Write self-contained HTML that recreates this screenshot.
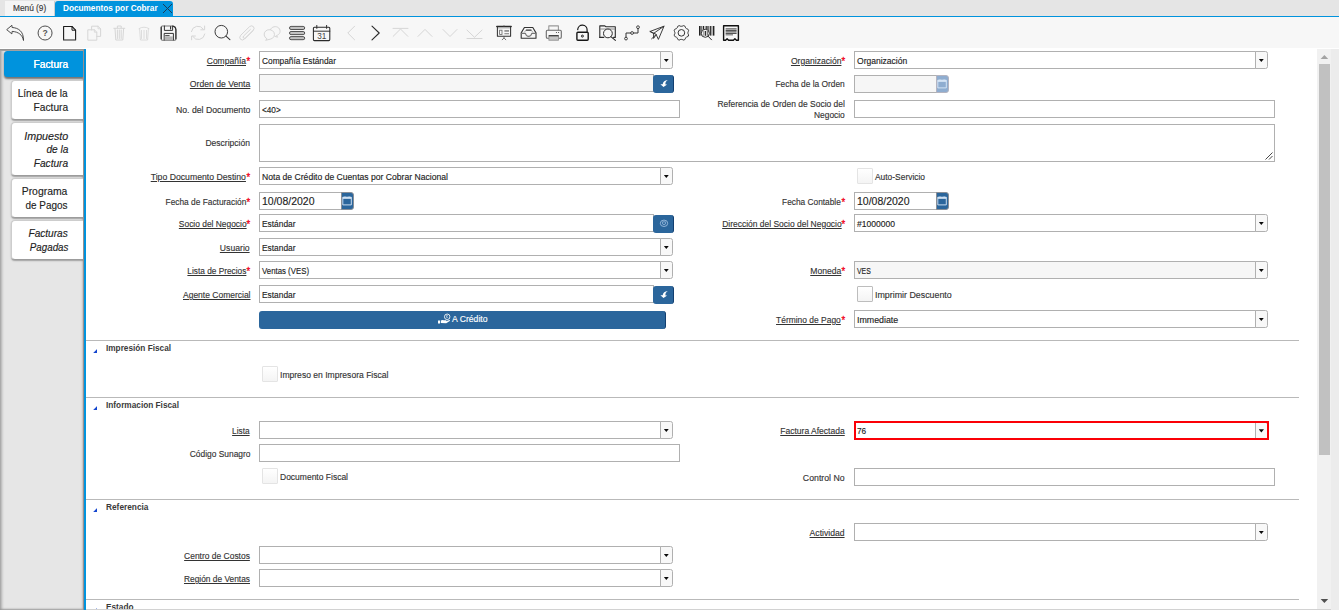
<!DOCTYPE html>
<html lang="es">
<head>
<meta charset="utf-8">
<title>Documentos por Cobrar</title>
<style>
html,body{margin:0;padding:0;}
body{width:1339px;height:610px;overflow:hidden;position:relative;background:#fff;font-family:"Liberation Sans",sans-serif;}
.t{position:absolute;white-space:nowrap;display:block;-webkit-text-stroke:0.15px;}
.in{position:absolute;box-sizing:border-box;border:1px solid #b0b0b0;background:#fff;}
.ro{background:#f6f6f6;}
.cb{position:absolute;box-sizing:border-box;border:1px solid #b0b0b0;background:#f8f8f8;border-radius:0 2.5px 2.5px 0;}
.cb:after{content:"";position:absolute;left:2.7px;top:6.8px;width:5.3px;height:3.3px;background:#0a0a0a;clip-path:polygon(0 0,100% 0,50% 100%);}
.bt{position:absolute;box-sizing:border-box;background:#2b669c;border-radius:3px;border-right:1px solid #123f70;}
.ck{position:absolute;box-sizing:border-box;width:15.6px;height:15.6px;border:1px solid #e4e4e4;border-radius:1px;background:linear-gradient(#fff,#f4f4f4);}
.sep{position:absolute;left:86px;width:1213px;height:1px;background:#b9b9b9;}
.tri{position:absolute;width:4.2px;height:4.4px;background:#1446cf;clip-path:polygon(100% 0,100% 100%,0 100%);}
svg{position:absolute;overflow:visible;}

</style>
</head>
<body>
<div style="position:absolute;left:0px;top:0px;width:1339px;height:16px;background:#e5e5e5;"></div>
<div style="position:absolute;left:5px;top:1px;width:48.5px;height:15px;background:#f5f5f5;border-right:1px solid #cfcfcf;"></div>
<div style="position:absolute;left:55px;top:1px;width:118px;height:16px;background:#0093dd;border-radius:3px 3px 0 0;"></div>
<div style="position:absolute;left:0px;top:16px;width:1339px;height:1.3px;background:#0093dd;"></div>
<span class="t" style="transform:scaleX(1.0056);left:12.8px;top:4px;font-size:8.25px;line-height:10px;color:#3a3a3a;font-weight:400;font-style:normal;transform-origin:left center;">Menú (9)</span>
<span class="t" style="transform:scaleX(0.9969);left:63.4px;top:4px;font-size:8.25px;line-height:10px;color:#fff;font-weight:700;font-style:normal;transform-origin:left center;-webkit-text-stroke:0;">Documentos por Cobrar</span>
<svg style="left:162px;top:3px" width="11" height="11" viewBox="0 0 11 11"><path d="M1,1 L10,10 M10,1 L1,10" stroke="#1d3b55" stroke-width="1" fill="none"/></svg>
<div style="position:absolute;left:0px;top:17.3px;width:1339px;height:30.7px;background:#f7f7f7;"></div>
<svg style="left:0;top:17px" width="760" height="31" viewBox="0 17 760 31">
<path d="M7,29.4 L11.9,25.3 L12.1,27.5 C18,27.8 23.7,31 23.5,40.5 C22.6,35 18.5,31.8 12.1,31.4 L11.9,33.5 Z" stroke="#3a3a3a" stroke-width="0.9" fill="none" stroke-linejoin="round" stroke-linecap="round" />
<circle cx="45.05" cy="33" r="7" fill="none" stroke="#444" stroke-width="0.95"/>
<text x="45" y="36.2" font-family="Liberation Sans, sans-serif" font-size="8.6" font-weight="700" fill="#555" text-anchor="middle">?</text>
<path d="M63.6,26.5 H72 L75.6,30.2 V40 H63.6 Z" stroke="#1a1a1a" stroke-width="1.1" fill="none" stroke-linejoin="round" stroke-linecap="round" />
<path d="M72,26.5 V30.2 H75.6" stroke="#1a1a1a" stroke-width="1" fill="none" stroke-linejoin="round" stroke-linecap="round" />
<path d="M63.6,40.3 H75.6" stroke="#999" stroke-width="0.8" fill="none" stroke-linejoin="round" stroke-linecap="round" />
<path d="M91.6,30 V26.2 H98 L100.6,28.8 V36.4 H96.8" stroke="#d6d6d6" stroke-width="1" fill="none" stroke-linejoin="round" stroke-linecap="round" />
<path d="M98,26.2 V28.8 H100.6" stroke="#d6d6d6" stroke-width="0.8" fill="none" stroke-linejoin="round" stroke-linecap="round" />
<path d="M88.2,29.8 H94.4 L96.8,32.2 V40.2 H88.2 Z" stroke="#d6d6d6" stroke-width="1" fill="none" stroke-linejoin="round" stroke-linecap="round" />
<path d="M94.4,29.8 V32.2 H96.8" stroke="#d6d6d6" stroke-width="0.8" fill="none" stroke-linejoin="round" stroke-linecap="round" />
<path d="M113.8,28.3 H124.8 M117.4,28 V26 H121.2 V28 M115,28.5 L115.8,40 H122.8 L123.6,28.5 M117.4,30 V38.5 M119.3,30 V38.5 M121.2,30 V38.5" stroke="#d6d6d6" stroke-width="1" fill="none" stroke-linejoin="round" stroke-linecap="round" />
<path d="M139,28.6 Q144,25.6 149,28.6 M139.6,28.8 L140.4,40 H147.6 L148.4,28.8 M141.5,30.4 V38.5 M144,30.4 V38.5 M146.5,30.4 V38.5" stroke="#d6d6d6" stroke-width="0.8" fill="none" stroke-linejoin="round" stroke-linecap="round" />
<path d="M162.3,26 H173 Q175.9,26.6 175.9,29.4 V39 Q175.9,40.2 174.8,40.2 H162.3 Q161.2,40.2 161.2,39 V27.1 Q161.2,26 162.3,26 Z" stroke="#777" stroke-width="1.1" fill="none" stroke-linejoin="round" stroke-linecap="round" />
<path d="M161.2,27.4 V38.8 M175.9,29.6 V38.8 M173.4,26.3 Q175.6,27 175.9,29.6" stroke="#2a2a2a" stroke-width="1.1" fill="none" stroke-linejoin="round" stroke-linecap="round" />
<path d="M164.4,26 V30.4 H172.6 V26" stroke="#2a2a2a" stroke-width="0.95" fill="none" stroke-linejoin="round" stroke-linecap="round" />
<path d="M170.6,26.6 V29" stroke="#2a2a2a" stroke-width="1.1" fill="none" stroke-linejoin="round" stroke-linecap="round" />
<path d="M164.2,40 V33.4 H173.4 V40" stroke="#2a2a2a" stroke-width="0.95" fill="none" stroke-linejoin="round" stroke-linecap="round" />
<rect x="164.8" y="36.4" width="8" height="3.6" fill="#b5b5b5"/>
<path d="M165.6,35.6 H169.2" stroke="#444" stroke-width="1" fill="none" stroke-linejoin="round" stroke-linecap="round" />
<path d="M191.4,31.6 A6.6,6.6 0 0 1 203.4,29.2 M204.6,26 V29.8 H200.8" stroke="#d6d6d6" stroke-width="1" fill="none" stroke-linejoin="round" stroke-linecap="round" />
<path d="M204.8,34 A6.6,6.6 0 0 1 192.8,36.6 M191.6,39.8 V36 H195.4" stroke="#d6d6d6" stroke-width="1" fill="none" stroke-linejoin="round" stroke-linecap="round" />
<circle cx="221.3" cy="31.7" r="6.3" fill="none" stroke="#333" stroke-width="0.95"/>
<path d="M226,36.2 L229.9,39.6" stroke="#333" stroke-width="1.05" fill="none" stroke-linejoin="round" stroke-linecap="round" />
<path d="M253,30.6 L244.6,39 Q242.2,41 240.4,39.2 Q238.8,37.4 240.8,35.2 L249.6,26.6 Q251.6,25 253.4,26.6 Q255,28.4 253.2,30.4 L245.4,38 Q244.2,38.8 243.4,38 Q242.6,37 243.6,36 L250.4,29.4" stroke="#d6d6d6" stroke-width="1" fill="none" stroke-linejoin="round" stroke-linecap="round" />
<path d="M270.4,29.6 A5,4.6 0 1 1 276.4,35.6 L277.6,37.2 L275,36.4" stroke="#d6d6d6" stroke-width="1" fill="none" stroke-linejoin="round" stroke-linecap="round" />
<path d="M266.6,38.6 A5.2,4.8 0 1 1 270.2,39.2 L266,40.2 Z" stroke="#d6d6d6" stroke-width="1" fill="#f7f7f7" stroke-linejoin="round" stroke-linecap="round" />
<rect x="289.5" y="26.4" width="15.2" height="3.1" rx="1.55" fill="#c2c2c2" stroke="#3a3a3a" stroke-width="0.85"/>
<rect x="289.5" y="31.5" width="15.2" height="3.1" rx="1.55" fill="#c2c2c2" stroke="#3a3a3a" stroke-width="0.85"/>
<rect x="289.5" y="36.6" width="15.2" height="3.1" rx="1.55" fill="#c2c2c2" stroke="#3a3a3a" stroke-width="0.85"/>
<path d="M314.4,27.2 H328.8 Q329.8,27.2 329.8,28.2 V39.6 Q329.8,40.6 328.8,40.6 H314.4 Q313.4,40.6 313.4,39.6 V28.2 Q313.4,27.2 314.4,27.2 Z" stroke="#2a2a2a" stroke-width="1.05" fill="none" stroke-linejoin="round" stroke-linecap="round" />
<path d="M313.4,31.2 H329.8 M316.8,25.4 V28.4 M326.6,25.4 V28.4" stroke="#2a2a2a" stroke-width="0.95" fill="none" stroke-linejoin="round" stroke-linecap="round" />
<text x="321.7" y="38.7" font-family="Liberation Sans, sans-serif" font-size="8.2" font-weight="400" fill="#444" text-anchor="middle">31</text>
<path d="M354.6,26.2 L347.8,33 L354.6,39.8" stroke="#d6d6d6" stroke-width="1" fill="none" stroke-linejoin="round" stroke-linecap="round" />
<path d="M372,26.2 L379.2,33 L372,39.8" stroke="#2a2a2a" stroke-width="1.1" fill="none" stroke-linejoin="round" stroke-linecap="round" />
<path d="M393,28.4 H408 M393.2,36.3 L400.5,29 L407.8,36.3" stroke="#d6d6d6" stroke-width="1" fill="none" stroke-linejoin="round" stroke-linecap="round" />
<path d="M418,36.4 L425,29.4 L432,36.4" stroke="#d6d6d6" stroke-width="1" fill="none" stroke-linejoin="round" stroke-linecap="round" />
<path d="M443,29.5 L450,36.5 L457,29.5" stroke="#d6d6d6" stroke-width="1" fill="none" stroke-linejoin="round" stroke-linecap="round" />
<path d="M467,30.1 L474.5,37.3 L482,30.1 M467,38.5 H482" stroke="#d6d6d6" stroke-width="1" fill="none" stroke-linejoin="round" stroke-linecap="round" />
<path d="M496.8,26.5 H511.2" stroke="#2a2a2a" stroke-width="1.4" fill="none" stroke-linejoin="round" stroke-linecap="round" />
<path d="M497.4,27 V36.2 H510.6 V27" stroke="#333" stroke-width="1.05" fill="none" stroke-linejoin="round" stroke-linecap="round" />
<rect x="498" y="27.3" width="12" height="1.1" fill="#aaa"/>
<path d="M504,36.6 V37.8 M502.2,39.8 L504,37.9 L505.8,39.8 M504,25.7 V26.2" stroke="#555" stroke-width="0.8" fill="none" stroke-linejoin="round" stroke-linecap="round" />
<rect x="499.6" y="30.2" width="2.4" height="4.2" fill="none" stroke="#666" stroke-width="0.8"/>
<rect x="504.4" y="30.4" width="4.6" height="1.1" fill="#555"/><rect x="504.4" y="33" width="4.6" height="1.3" fill="#999"/>
<path d="M521.2,32.9 L524.4,27.5 H532.8 L536,32.9 V38.3 H521.2 Z" stroke="#333" stroke-width="1.1" fill="none" stroke-linejoin="round" stroke-linecap="round" />
<path d="M521.4,33.4 H525.4 Q526.2,36.4 528.6,36.4 Q531,36.4 531.8,33.4 H535.8" stroke="#777" stroke-width="1.1" fill="none" stroke-linejoin="round" stroke-linecap="round" />
<rect x="525.8" y="29.4" width="5.8" height="1.4" rx="0.5" fill="#333"/>
<path d="M524.6,32 L525.6,30.6 M532.6,32 L531.6,30.6" stroke="#888" stroke-width="0.7" fill="none" stroke-linejoin="round" stroke-linecap="round" />
<path d="M548.8,30 V25.9 H558.4 V30" stroke="#999" stroke-width="1.1" fill="none" stroke-linejoin="round" stroke-linecap="round" />
<path d="M548.6,38.3 H547.4 Q546.3,38.3 546.3,37 V31.5 Q546.3,30.3 547.4,30.3 H560.2 Q561.3,30.3 561.3,31.5 V37 Q561.3,38.3 560.2,38.3 H558.8" stroke="#6a6a6a" stroke-width="1.1" fill="none" stroke-linejoin="round" stroke-linecap="round" />
<rect x="548.9" y="35.6" width="9.6" height="4.6" fill="#c6c6c6" stroke="#888" stroke-width="0.8"/>
<path d="M549.2,35.8 H558.2" stroke="#222" stroke-width="1" fill="none" stroke-linejoin="round" stroke-linecap="round" />
<circle cx="556.4" cy="32.5" r="0.55" fill="#333"/><circle cx="558.6" cy="32.5" r="0.55" fill="#333"/>
<rect x="576.9" y="32.2" width="11.3" height="8" rx="1" fill="none" stroke="#161616" stroke-width="1.4"/>
<path d="M577.7,29.6 A4.7,4.7 0 0 1 587.1,30 V31.8" stroke="#161616" stroke-width="1.2" fill="none" stroke-linejoin="round" stroke-linecap="round" />
<circle cx="582.4" cy="36.1" r="1.05" fill="#bbb" stroke="#222" stroke-width="0.9"/>
<path d="M599.8,37.4 V25.9 H604.8 L606,26.8 H615.3 V37.4 H613.6" stroke="#2a2a2a" stroke-width="1.1" fill="none" stroke-linejoin="round" stroke-linecap="round" />
<path d="M599.8,37.4 H603.8" stroke="#2a2a2a" stroke-width="1.1" fill="none" stroke-linejoin="round" stroke-linecap="round" />
<path d="M600.4,29 H614.8" stroke="#888" stroke-width="1" fill="none" stroke-linejoin="round" stroke-linecap="round" />
<circle cx="607.9" cy="33.4" r="4.4" fill="#f7f7f7" stroke="#2a2a2a" stroke-width="1"/>
<path d="M611.2,36.8 L615.4,40.4" stroke="#2a2a2a" stroke-width="1.1" fill="none" stroke-linejoin="round" stroke-linecap="round" />
<path d="M626,37.2 V33 H630.6 M633.6,33 H638 V28.6" stroke="#333" stroke-width="1" fill="none" stroke-linejoin="round" stroke-linecap="round" />
<circle cx="626" cy="38.6" r="1.4" fill="none" stroke="#333" stroke-width="0.9"/>
<circle cx="632.1" cy="33" r="1.4" fill="none" stroke="#333" stroke-width="0.9"/>
<circle cx="638" cy="27.2" r="1.4" fill="none" stroke="#333" stroke-width="0.9"/>
<path d="M650.2,31.4 L664,26.2 L658.4,39.4 L656.2,34.6 Z M664,26.2 L653.6,33.4 V38.4 L656.2,34.6 M653.6,33.4 L650.2,31.4 M651.6,38.8 L654.6,36" stroke="#333" stroke-width="0.95" fill="none" stroke-linejoin="round" stroke-linecap="round" />
<path d="M688.36,35.73 L688.04,36.40 L687.26,36.77 L686.48,37.02 L686.05,37.50 L685.57,37.93 L685.32,38.71 L684.95,39.49 L684.28,39.81 L683.59,40.06 L682.78,39.76 L682.04,39.39 L681.40,39.42 L680.76,39.39 L680.02,39.76 L679.21,40.06 L678.52,39.81 L677.85,39.49 L677.48,38.71 L677.23,37.93 L676.75,37.50 L676.32,37.02 L675.54,36.77 L674.76,36.40 L674.44,35.73 L674.19,35.04 L674.49,34.23 L674.86,33.49 L674.83,32.85 L674.86,32.21 L674.49,31.47 L674.19,30.66 L674.44,29.97 L674.76,29.30 L675.54,28.93 L676.32,28.68 L676.75,28.20 L677.23,27.77 L677.48,26.99 L677.85,26.21 L678.52,25.89 L679.21,25.64 L680.02,25.94 L680.76,26.31 L681.40,26.28 L682.04,26.31 L682.78,25.94 L683.59,25.64 L684.28,25.89 L684.95,26.21 L685.32,26.99 L685.57,27.77 L686.05,28.20 L686.48,28.68 L687.26,28.93 L688.04,29.30 L688.36,29.97 L688.61,30.66 L688.31,31.47 L687.94,32.21 L687.97,32.85 L687.94,33.49 L688.31,34.23 L688.61,35.04 L688.36,35.73 Z" stroke="#333" stroke-width="1" fill="none" stroke-linejoin="round" stroke-linecap="round" />
<circle cx="681.4" cy="32.85" r="3.3" fill="none" stroke="#333" stroke-width="1"/>
<rect x="699" y="26" width="1.6" height="9.6" fill="#222"/>
<rect x="701.4" y="26" width="0.7" height="9.6" fill="#222"/>
<rect x="702.8" y="26" width="1.2" height="9.6" fill="#222"/>
<rect x="704.8" y="26" width="0.6" height="9.6" fill="#222"/>
<rect x="706.2" y="26" width="1.4" height="9.6" fill="#222"/>
<rect x="708.4" y="26" width="0.7" height="9.6" fill="#222"/>
<rect x="709.8" y="26" width="1.1" height="9.6" fill="#222"/>
<rect x="711.6" y="26" width="0.7" height="9.6" fill="#222"/>
<rect x="713" y="26" width="1.4" height="9.6" fill="#222"/>
<circle cx="705.3" cy="33.3" r="4" fill="#f7f7f7" stroke="#2a2a2a" stroke-width="0.95"/>
<rect x="703.6" y="31" width="0.7" height="4.8" fill="#333"/>
<rect x="705" y="31" width="1.2" height="4.8" fill="#333"/>
<rect x="707" y="31" width="0.6" height="4.8" fill="#333"/>
<path d="M708.3,36.4 L711.5,39.8" stroke="#2a2a2a" stroke-width="1" fill="none" stroke-linejoin="round" stroke-linecap="round" />
<path d="M723.6,25.8 H738.4 V40.2 H736.4 L734.9,38.8 L733.4,40.2 H728.6 L727.1,38.8 L725.6,40.2 H723.6 Z" stroke="#111" stroke-width="1.4" fill="none" stroke-linejoin="round" stroke-linecap="round" />
<rect x="725.6" y="28.4" width="11" height="0.95" fill="#3a3a3a"/>
<rect x="725.6" y="29.9" width="11" height="0.95" fill="#3a3a3a"/>
<rect x="725.6" y="31.4" width="11" height="0.95" fill="#3a3a3a"/>
<rect x="725.6" y="32.9" width="11" height="0.95" fill="#3a3a3a"/>
<rect x="725.6" y="34.4" width="7.4" height="0.9" fill="#555"/>
</svg>
<div style="position:absolute;left:0px;top:48.6px;width:84px;height:561.4px;background:#e6e6e6;box-shadow:inset 3.5px 0 3px -2px #9a9a9a, inset -3px 0 2px -1.5px #b0a8a8, inset 0 -2px 2px -1px #999;"></div>
<div style="position:absolute;left:84px;top:49px;width:2.4px;height:561px;background:#0093dd;"></div>
<div style="position:absolute;left:4px;top:50.6px;width:79.2px;height:26.3px;background:#0093dd;border-radius:3.5px 0 0 3.5px;box-shadow:0 1.5px 2px rgba(0,0,0,.5);"></div>
<div style="position:absolute;left:11.3px;top:79.6px;width:71.9px;height:40.2px;background:#fff;border:1px solid #cdcdcd;border-right:0;border-bottom:1px solid #9c9c9c;box-sizing:border-box;border-radius:4px 0 0 4px;box-shadow:0 1px 1.5px rgba(0,0,0,.3);"></div>
<div style="position:absolute;left:11.3px;top:121.8px;width:71.9px;height:53.8px;background:#fff;border:1px solid #cdcdcd;border-right:0;border-bottom:1px solid #9c9c9c;box-sizing:border-box;border-radius:4px 0 0 4px;box-shadow:0 1px 1.5px rgba(0,0,0,.3);"></div>
<div style="position:absolute;left:11.3px;top:177.7px;width:71.9px;height:40.3px;background:#fff;border:1px solid #cdcdcd;border-right:0;border-bottom:1px solid #9c9c9c;box-sizing:border-box;border-radius:4px 0 0 4px;box-shadow:0 1px 1.5px rgba(0,0,0,.3);"></div>
<div style="position:absolute;left:11.3px;top:220.2px;width:71.9px;height:40px;background:#fff;border:1px solid #cdcdcd;border-right:0;border-bottom:1px solid #9c9c9c;box-sizing:border-box;border-radius:4px 0 0 4px;box-shadow:0 1px 1.5px rgba(0,0,0,.3);"></div>
<div style="position:absolute;left:83.1px;top:48.8px;width:1px;height:561.2px;background:#969090;"></div>
<div style="position:absolute;left:0px;top:48.8px;width:83.2px;height:1.8px;background:linear-gradient(#8c8c8c,#a8a8a8);"></div>
<span class="t" style="transform:scaleX(0.9072);right:1271px;top:56.6px;font-size:11.25px;line-height:14px;color:#fff;font-weight:400;font-style:normal;transform-origin:right center;text-shadow:0 0 .4px #fff;">Factura</span>
<span class="t" style="transform:scaleX(0.8979);right:1271px;top:86.3px;font-size:11.25px;line-height:14px;color:#222;font-weight:400;font-style:normal;transform-origin:right center;">Línea de la</span>
<span class="t" style="transform:scaleX(0.9072);right:1271px;top:100.1px;font-size:11.25px;line-height:14px;color:#222;font-weight:400;font-style:normal;transform-origin:right center;">Factura</span>
<span class="t" style="transform:scaleX(0.9507);right:1271px;top:128.7px;font-size:11.25px;line-height:14px;color:#222;font-weight:400;font-style:italic;transform-origin:right center;">Impuesto</span>
<span class="t" style="transform:scaleX(0.9014);right:1271px;top:142.4px;font-size:11.25px;line-height:14px;color:#222;font-weight:400;font-style:italic;transform-origin:right center;">de la</span>
<span class="t" style="transform:scaleX(0.9019);right:1271px;top:156.3px;font-size:11.25px;line-height:14px;color:#222;font-weight:400;font-style:italic;transform-origin:right center;">Factura</span>
<span class="t" style="transform:scaleX(0.9250);right:1271.3px;top:184.3px;font-size:11.25px;line-height:14px;color:#222;font-weight:400;font-style:normal;transform-origin:right center;">Programa</span>
<span class="t" style="transform:scaleX(0.8833);right:1271.3px;top:198.0px;font-size:11.25px;line-height:14px;color:#222;font-weight:400;font-style:normal;transform-origin:right center;">de Pagos</span>
<span class="t" style="transform:scaleX(0.8980);right:1271px;top:226.3px;font-size:11.25px;line-height:14px;color:#222;font-weight:400;font-style:italic;transform-origin:right center;">Facturas</span>
<span class="t" style="transform:scaleX(0.8689);right:1271px;top:240.2px;font-size:11.25px;line-height:14px;color:#222;font-weight:400;font-style:italic;transform-origin:right center;">Pagadas</span>
<div style="position:absolute;left:1317.2px;top:49px;width:14.1px;height:560px;background:#f1f1f1;"></div>
<div style="position:absolute;left:1331.3px;top:49px;width:7.7px;height:561px;background:#ececec;"></div>
<div style="position:absolute;left:1319.2px;top:64px;width:11px;height:390.5px;background:#c1c1c1;"></div>
<svg style="left:1320px;top:54px" width="9" height="6" viewBox="0 0 9 6"><path d="M0.6,5 L4.4,1 L8.2,5 Z" fill="#a3a3a3"/></svg>
<svg style="left:1320px;top:598px" width="9" height="6" viewBox="0 0 9 6"><path d="M0.6,1 L4.4,5 L8.2,1 Z" fill="#505050"/></svg>
<div style="position:absolute;left:86.4px;top:608.5px;width:1245px;height:1.5px;background:#d2d2d2;"></div>
<span class="t" style="transform:scaleX(0.8725);right:1092.75px;top:53.95px;font-size:9.75px;line-height:13px;color:#333;font-weight:400;font-style:normal;text-decoration:underline;transform-origin:right center;">Compañía</span>
<span class="t" style="transform:scaleX(0.9038);right:1088.5px;top:54.75px;font-size:10.5px;line-height:13px;color:#f0001c;font-weight:400;font-style:normal;transform-origin:right center;-webkit-text-stroke:0.3px #f0001c;">*</span>
<div class="in" style="left:259px;top:51px;width:401.5px;height:18px;border-right:0"></div>
<div class="cb" style="left:660.0px;top:51px;width:12.5px;height:18px"></div>
<span class="t" style="transform:scaleX(0.8533);left:262px;top:53.95px;font-size:9.75px;line-height:13px;color:#222;font-weight:400;font-style:normal;transform-origin:left center;">Compañía Estándar</span>
<span class="t" style="transform:scaleX(0.8856);right:1089px;top:77.25px;font-size:9.75px;line-height:13px;color:#333;font-weight:400;font-style:normal;text-decoration:underline;transform-origin:right center;">Orden de Venta</span>
<div class="in ro" style="left:259px;top:74px;width:394.5px;height:18px"></div>
<div class="bt" style="left:653px;top:75px;width:21px;height:18px"><svg style="left:0;top:0" width="21" height="18" viewBox="0 0 21 18"><path d="M14.8,5.1 Q10.2,5.5 9.7,9.3 L7.4,9.2 L10.5,12 L14.2,9.4 L12.5,9.4 Q11.9,7 14.8,5.1 Z" fill="#fff"/></svg></div>
<span class="t" style="transform:scaleX(0.8925);right:1089px;top:102.95px;font-size:9.75px;line-height:13px;color:#333;font-weight:400;font-style:normal;transform-origin:right center;">No. del Documento</span>
<div class="in" style="left:259px;top:100px;width:421px;height:18px"></div>
<span class="t" style="transform:scaleX(0.8433);left:262px;top:102.95px;font-size:9.75px;line-height:13px;color:#222;font-weight:400;font-style:normal;transform-origin:left center;">&lt;40&gt;</span>
<span class="t" style="transform:scaleX(0.8736);right:1089px;top:136.45px;font-size:9.75px;line-height:13px;color:#333;font-weight:400;font-style:normal;transform-origin:right center;">Descripción</span>
<div class="in" style="left:259px;top:124px;width:1016px;height:38px"></div>
<svg style="left:1265px;top:152px" width="8" height="8" viewBox="0 0 8 8"><path d="M7.5,0.5 L0.5,7.5 M7.5,4 L4,7.5" stroke="#333" stroke-width="0.9" fill="none"/></svg>
<span class="t" style="transform:scaleX(0.8906);right:1092.75px;top:170.25px;font-size:9.75px;line-height:13px;color:#333;font-weight:400;font-style:normal;text-decoration:underline;transform-origin:right center;">Tipo Documento Destino</span>
<span class="t" style="transform:scaleX(0.9038);right:1088.5px;top:171.05px;font-size:10.5px;line-height:13px;color:#f0001c;font-weight:400;font-style:normal;transform-origin:right center;-webkit-text-stroke:0.3px #f0001c;">*</span>
<div class="in" style="left:259px;top:167px;width:401.5px;height:18px;border-right:0"></div>
<div class="cb" style="left:660.0px;top:167px;width:12.5px;height:18px"></div>
<span class="t" style="transform:scaleX(0.8822);left:262px;top:169.95px;font-size:9.75px;line-height:13px;color:#222;font-weight:400;font-style:normal;transform-origin:left center;">Nota de Crédito de Cuentas por Cobrar Nacional</span>
<span class="t" style="transform:scaleX(0.8562);right:1092.75px;top:194.95px;font-size:9.75px;line-height:13px;color:#333;font-weight:400;font-style:normal;transform-origin:right center;">Fecha de Facturación</span>
<span class="t" style="transform:scaleX(0.9038);right:1088.5px;top:195.75px;font-size:10.5px;line-height:13px;color:#f0001c;font-weight:400;font-style:normal;transform-origin:right center;-webkit-text-stroke:0.3px #f0001c;">*</span>
<div class="in" style="left:259px;top:192px;width:82.5px;height:18px;border-right:0"></div>
<div style="position:absolute;box-sizing:border-box;left:341.3px;top:192px;width:12.4px;height:18px;background:#2b669c;border:1px solid #8a8f96;border-left-width:0.7px;border-radius:0 3px 3px 0"><svg style="left:-0.2px;top:2.7px" width="11" height="11" viewBox="0 0 11 11"><path d="M0.8,1.2 H9.3 V8.9 H0.8 Z" fill="none" stroke="#dbe9f8" stroke-width="0.9"/><path d="M0.8,2 H9.3" stroke="#dbe9f8" stroke-width="1.6"/><path d="M3,0.4 V1.6 M7.1,0.4 V1.6" stroke="#dbe9f8" stroke-width="0.8"/></svg></div>
<span class="t" style="transform:scaleX(0.9323);left:262px;top:194.15px;font-size:11.25px;line-height:14px;color:#222;font-weight:400;font-style:normal;transform-origin:left center;">10/08/2020</span>
<span class="t" style="transform:scaleX(0.8620);right:1092.75px;top:216.95px;font-size:9.75px;line-height:13px;color:#333;font-weight:400;font-style:normal;text-decoration:underline;transform-origin:right center;">Socio del Negocio</span>
<span class="t" style="transform:scaleX(0.9038);right:1088.5px;top:217.75px;font-size:10.5px;line-height:13px;color:#f0001c;font-weight:400;font-style:normal;transform-origin:right center;-webkit-text-stroke:0.3px #f0001c;">*</span>
<div class="in" style="left:259px;top:214px;width:394.5px;height:18px"></div>
<span class="t" style="transform:scaleX(0.8583);left:262px;top:216.95px;font-size:9.75px;line-height:13px;color:#222;font-weight:400;font-style:normal;transform-origin:left center;">Estándar</span>
<div class="bt" style="left:653px;top:215px;width:21px;height:18px"><svg style="left:0;top:0" width="21" height="18" viewBox="0 0 21 18"><ellipse cx="11" cy="8.3" rx="3.7" ry="3.2" fill="none" stroke="#a9c6e6" stroke-width="0.8"/><path d="M9.6,6.8 V9 Q11,10.4 12.4,9 V6.8 M9.6,6.8 H12.4" fill="none" stroke="#a9c6e6" stroke-width="0.7"/></svg></div>
<span class="t" style="transform:scaleX(0.8852);right:1089px;top:240.95px;font-size:9.75px;line-height:13px;color:#333;font-weight:400;font-style:normal;text-decoration:underline;transform-origin:right center;">Usuario</span>
<div class="in" style="left:259px;top:238px;width:401.5px;height:18px;border-right:0"></div>
<div class="cb" style="left:660.0px;top:238px;width:12.5px;height:18px"></div>
<span class="t" style="transform:scaleX(0.8583);left:262px;top:240.95px;font-size:9.75px;line-height:13px;color:#222;font-weight:400;font-style:normal;transform-origin:left center;">Estandar</span>
<span class="t" style="transform:scaleX(0.8505);right:1092.75px;top:263.95px;font-size:9.75px;line-height:13px;color:#333;font-weight:400;font-style:normal;text-decoration:underline;transform-origin:right center;">Lista de Precios</span>
<span class="t" style="transform:scaleX(0.9038);right:1088.5px;top:264.75px;font-size:10.5px;line-height:13px;color:#f0001c;font-weight:400;font-style:normal;transform-origin:right center;-webkit-text-stroke:0.3px #f0001c;">*</span>
<div class="in" style="left:259px;top:261px;width:401.5px;height:18px;border-right:0"></div>
<div class="cb" style="left:660.0px;top:261px;width:12.5px;height:18px"></div>
<span class="t" style="transform:scaleX(0.8030);left:262px;top:263.95px;font-size:9.75px;line-height:13px;color:#222;font-weight:400;font-style:normal;transform-origin:left center;">Ventas (VES)</span>
<span class="t" style="transform:scaleX(0.8710);right:1089px;top:287.95px;font-size:9.75px;line-height:13px;color:#333;font-weight:400;font-style:normal;text-decoration:underline;transform-origin:right center;">Agente Comercial</span>
<div class="in" style="left:259px;top:285px;width:394.5px;height:18px"></div>
<span class="t" style="transform:scaleX(0.8583);left:262px;top:287.95px;font-size:9.75px;line-height:13px;color:#222;font-weight:400;font-style:normal;transform-origin:left center;">Estandar</span>
<div class="bt" style="left:653px;top:286px;width:21px;height:18px"><svg style="left:0;top:0" width="21" height="18" viewBox="0 0 21 18"><path d="M14.8,5.1 Q10.2,5.5 9.7,9.3 L7.4,9.2 L10.5,12 L14.2,9.4 L12.5,9.4 Q11.9,7 14.8,5.1 Z" fill="#fff"/></svg></div>
<div class="bt" style="left:259px;top:311px;width:406.5px;height:18px"></div>
<svg style="left:438px;top:313.2px" width="13" height="13" viewBox="0 0 13 13"><circle cx="9.2" cy="3.8" r="2.75" fill="none" stroke="#fff" stroke-width="0.85"/><path d="M8.6,2.6 V4.4 H9.8 M8.6,2.6 H9.8" stroke="#fff" stroke-width="0.6" fill="none"/><path d="M0,7.4 H2 V10.6 H0 Z M2.8,7.6 Q4.2,6.6 5.8,7.2 L8.2,7.3 Q8.8,7.9 8,8.3 L11.4,7 Q12.4,7.2 11.8,8 L8.2,10.3 L2.8,10.1 Z" fill="#fff"/></svg>
<span class="t" style="transform:scaleX(0.8851);left:452px;top:312.1px;font-size:9.75px;line-height:13px;color:#fff;font-weight:400;font-style:normal;transform-origin:left center;">A Crédito</span>
<span class="t" style="transform:scaleX(0.8790);right:497.75px;top:53.95px;font-size:9.75px;line-height:13px;color:#333;font-weight:400;font-style:normal;text-decoration:underline;transform-origin:right center;">Organización</span>
<span class="t" style="transform:scaleX(0.9038);right:493.5px;top:54.75px;font-size:10.5px;line-height:13px;color:#f0001c;font-weight:400;font-style:normal;transform-origin:right center;-webkit-text-stroke:0.3px #f0001c;">*</span>
<div class="in" style="left:854px;top:51px;width:401.5px;height:18px;border-right:0"></div>
<div class="cb" style="left:1255.0px;top:51px;width:12.5px;height:18px"></div>
<span class="t" style="transform:scaleX(0.8746);left:857px;top:53.95px;font-size:9.75px;line-height:13px;color:#222;font-weight:400;font-style:normal;transform-origin:left center;">Organización</span>
<span class="t" style="transform:scaleX(0.8574);right:494px;top:77.25px;font-size:9.75px;line-height:13px;color:#333;font-weight:400;font-style:normal;transform-origin:right center;">Fecha de la Orden</span>
<div class="in ro" style="left:854px;top:75px;width:82.5px;height:18px;border-right:0"></div>
<div style="position:absolute;box-sizing:border-box;left:936.3px;top:75px;width:12.4px;height:18px;background:#8fadd0;border:1px solid #b4b4c0;border-left-width:0.7px;border-radius:0 3px 3px 0"><svg style="left:-0.2px;top:2.7px" width="11" height="11" viewBox="0 0 11 11"><path d="M0.8,1.2 H9.3 V8.9 H0.8 Z" fill="none" stroke="#dbe9f8" stroke-width="0.9"/><path d="M0.8,2 H9.3" stroke="#dbe9f8" stroke-width="1.6"/><path d="M3,0.4 V1.6 M7.1,0.4 V1.6" stroke="#dbe9f8" stroke-width="0.8"/></svg></div>
<span class="t" style="transform:scaleX(0.8680);right:494px;top:96.7px;font-size:9.75px;line-height:13px;color:#333;font-weight:400;font-style:normal;transform-origin:right center;">Referencia de Orden de Socio del</span>
<span class="t" style="transform:scaleX(0.8594);right:494px;top:107.5px;font-size:9.75px;line-height:13px;color:#333;font-weight:400;font-style:normal;transform-origin:right center;">Negocio</span>
<div class="in" style="left:854px;top:100px;width:421px;height:18px"></div>
<div class="ck" style="left:857.1px;top:168.2px;border-color:#e4e4e4"></div>
<span class="t" style="transform:scaleX(0.8623);left:875.1px;top:170.2px;font-size:9.75px;line-height:13px;color:#333;font-weight:400;font-style:normal;transform-origin:left center;">Auto-Servicio</span>
<span class="t" style="transform:scaleX(0.8534);right:497.75px;top:194.95px;font-size:9.75px;line-height:13px;color:#333;font-weight:400;font-style:normal;transform-origin:right center;">Fecha Contable</span>
<span class="t" style="transform:scaleX(0.9038);right:493.5px;top:195.75px;font-size:10.5px;line-height:13px;color:#f0001c;font-weight:400;font-style:normal;transform-origin:right center;-webkit-text-stroke:0.3px #f0001c;">*</span>
<div class="in" style="left:854px;top:192px;width:82.5px;height:18px;border-right:0"></div>
<div style="position:absolute;box-sizing:border-box;left:936.3px;top:192px;width:12.4px;height:18px;background:#2b669c;border:1px solid #8a8f96;border-left-width:0.7px;border-radius:0 3px 3px 0"><svg style="left:-0.2px;top:2.7px" width="11" height="11" viewBox="0 0 11 11"><path d="M0.8,1.2 H9.3 V8.9 H0.8 Z" fill="none" stroke="#dbe9f8" stroke-width="0.9"/><path d="M0.8,2 H9.3" stroke="#dbe9f8" stroke-width="1.6"/><path d="M3,0.4 V1.6 M7.1,0.4 V1.6" stroke="#dbe9f8" stroke-width="0.8"/></svg></div>
<span class="t" style="transform:scaleX(0.9323);left:857px;top:194.15px;font-size:11.25px;line-height:14px;color:#222;font-weight:400;font-style:normal;transform-origin:left center;">10/08/2020</span>
<span class="t" style="transform:scaleX(0.8680);right:497.75px;top:216.95px;font-size:9.75px;line-height:13px;color:#333;font-weight:400;font-style:normal;text-decoration:underline;transform-origin:right center;">Dirección del Socio del Negocio</span>
<span class="t" style="transform:scaleX(0.9038);right:493.5px;top:217.75px;font-size:10.5px;line-height:13px;color:#f0001c;font-weight:400;font-style:normal;transform-origin:right center;-webkit-text-stroke:0.3px #f0001c;">*</span>
<div class="in" style="left:854px;top:214px;width:401.5px;height:18px;border-right:0"></div>
<div class="cb" style="left:1255.0px;top:214px;width:12.5px;height:18px"></div>
<span class="t" style="transform:scaleX(0.8758);left:857px;top:216.95px;font-size:9.75px;line-height:13px;color:#222;font-weight:400;font-style:normal;transform-origin:left center;">#1000000</span>
<span class="t" style="transform:scaleX(0.8798);right:497.75px;top:263.95px;font-size:9.75px;line-height:13px;color:#333;font-weight:400;font-style:normal;text-decoration:underline;transform-origin:right center;">Moneda</span>
<span class="t" style="transform:scaleX(0.9038);right:493.5px;top:264.75px;font-size:10.5px;line-height:13px;color:#f0001c;font-weight:400;font-style:normal;transform-origin:right center;-webkit-text-stroke:0.3px #f0001c;">*</span>
<div class="in ro" style="left:854px;top:261px;width:401.5px;height:18px;border-right:0"></div>
<div class="cb" style="left:1255.0px;top:261px;width:12.5px;height:18px"></div>
<span class="t" style="transform:scaleX(0.7046);left:857px;top:263.95px;font-size:9.75px;line-height:13px;color:#222;font-weight:400;font-style:normal;transform-origin:left center;">VES</span>
<div class="ck" style="left:857px;top:286.4px;border-color:#bdbdbd"></div>
<span class="t" style="transform:scaleX(0.9079);left:875px;top:287.59999999999997px;font-size:9.75px;line-height:13px;color:#333;font-weight:400;font-style:normal;transform-origin:left center;">Imprimir Descuento</span>
<span class="t" style="transform:scaleX(0.8657);right:497.75px;top:312.95px;font-size:9.75px;line-height:13px;color:#333;font-weight:400;font-style:normal;text-decoration:underline;transform-origin:right center;">Término de Pago</span>
<span class="t" style="transform:scaleX(0.9038);right:493.5px;top:313.75px;font-size:10.5px;line-height:13px;color:#f0001c;font-weight:400;font-style:normal;transform-origin:right center;-webkit-text-stroke:0.3px #f0001c;">*</span>
<div class="in" style="left:854px;top:310px;width:401.5px;height:18px;border-right:0"></div>
<div class="cb" style="left:1255.0px;top:310px;width:12.5px;height:18px"></div>
<span class="t" style="transform:scaleX(0.9060);left:857px;top:312.95px;font-size:9.75px;line-height:13px;color:#222;font-weight:400;font-style:normal;transform-origin:left center;">Immediate</span>
<div class="sep" style="top:340px"></div>
<div class="tri" style="left:93.2px;top:348.7px"></div>
<span class="t" style="transform:scaleX(0.9983);left:105.75px;top:343.7px;font-size:8.25px;line-height:10px;color:#3a3a3a;font-weight:700;font-style:normal;transform-origin:left center;-webkit-text-stroke:0;">Impresión Fiscal</span>
<div class="ck" style="left:262px;top:366.3px;border-color:#e4e4e4"></div>
<span class="t" style="transform:scaleX(0.8782);left:280px;top:367.5px;font-size:9.75px;line-height:13px;color:#333;font-weight:400;font-style:normal;transform-origin:left center;">Impreso en Impresora Fiscal</span>
<div class="sep" style="top:397px"></div>
<div class="tri" style="left:93.2px;top:405.7px"></div>
<span class="t" style="transform:scaleX(1.0013);left:105.75px;top:400.7px;font-size:8.25px;line-height:10px;color:#3a3a3a;font-weight:700;font-style:normal;transform-origin:left center;-webkit-text-stroke:0;">Informacion Fiscal</span>
<span class="t" style="transform:scaleX(0.8491);right:1089px;top:423.95px;font-size:9.75px;line-height:13px;color:#333;font-weight:400;font-style:normal;text-decoration:underline;transform-origin:right center;">Lista</span>
<div class="in" style="left:259px;top:421px;width:401.5px;height:18px;border-right:0"></div>
<div class="cb" style="left:660.0px;top:421px;width:12.5px;height:18px"></div>
<span class="t" style="transform:scaleX(0.8621);right:1089px;top:446.95px;font-size:9.75px;line-height:13px;color:#333;font-weight:400;font-style:normal;transform-origin:right center;">Código Sunagro</span>
<div class="in" style="left:259px;top:444px;width:421px;height:18px"></div>
<div class="ck" style="left:262px;top:468.3px;border-color:#e4e4e4"></div>
<span class="t" style="transform:scaleX(0.8714);left:280px;top:469.5px;font-size:9.75px;line-height:13px;color:#333;font-weight:400;font-style:normal;transform-origin:left center;">Documento Fiscal</span>
<span class="t" style="transform:scaleX(0.8749);right:494px;top:424.45px;font-size:9.75px;line-height:13px;color:#333;font-weight:400;font-style:normal;text-decoration:underline;transform-origin:right center;">Factura Afectada</span>
<div class="in" style="left:854px;top:421.5px;width:401.5px;height:18px;border-right:0"></div>
<div class="cb" style="left:1255.0px;top:421.5px;width:12.5px;height:18px"></div>
<div style="position:absolute;left:853.9px;top:420.9px;width:415.2px;height:19.1px;border:2.1px solid #fb0007;box-sizing:border-box;"></div>
<span class="t" style="transform:scaleX(0.8518);left:857px;top:424.45px;font-size:9.75px;line-height:13px;color:#222;font-weight:400;font-style:normal;transform-origin:left center;">76</span>
<span class="t" style="transform:scaleX(0.8957);right:494px;top:470.95px;font-size:9.75px;line-height:13px;color:#333;font-weight:400;font-style:normal;transform-origin:right center;">Control No</span>
<div class="in" style="left:854px;top:468px;width:421px;height:18px"></div>
<div class="sep" style="top:499px"></div>
<div class="tri" style="left:93.2px;top:507.7px"></div>
<span class="t" style="transform:scaleX(1.0070);left:105.75px;top:502.7px;font-size:8.25px;line-height:10px;color:#3a3a3a;font-weight:700;font-style:normal;transform-origin:left center;-webkit-text-stroke:0;">Referencia</span>
<span class="t" style="transform:scaleX(0.8847);right:494px;top:525.95px;font-size:9.75px;line-height:13px;color:#333;font-weight:400;font-style:normal;text-decoration:underline;transform-origin:right center;">Actividad</span>
<div class="in" style="left:854px;top:523px;width:401.5px;height:18px;border-right:0"></div>
<div class="cb" style="left:1255.0px;top:523px;width:12.5px;height:18px"></div>
<span class="t" style="transform:scaleX(0.8666);right:1089px;top:548.95px;font-size:9.75px;line-height:13px;color:#333;font-weight:400;font-style:normal;text-decoration:underline;transform-origin:right center;">Centro de Costos</span>
<div class="in" style="left:259px;top:546px;width:401.5px;height:18px;border-right:0"></div>
<div class="cb" style="left:660.0px;top:546px;width:12.5px;height:18px"></div>
<span class="t" style="transform:scaleX(0.8573);right:1089px;top:571.95px;font-size:9.75px;line-height:13px;color:#333;font-weight:400;font-style:normal;text-decoration:underline;transform-origin:right center;">Región de Ventas</span>
<div class="in" style="left:259px;top:569px;width:401.5px;height:18px;border-right:0"></div>
<div class="cb" style="left:660.0px;top:569px;width:12.5px;height:18px"></div>
<div class="sep" style="top:599px"></div>
<div class="tri" style="left:93.2px;top:607.7px"></div>
<span class="t" style="transform:scaleX(0.9994);left:105.75px;top:602.7px;font-size:8.25px;line-height:10px;color:#3a3a3a;font-weight:700;font-style:normal;transform-origin:left center;-webkit-text-stroke:0;">Estado</span>
<div style="position:absolute;left:86.4px;top:608.5px;width:1231px;height:1.5px;background:#d2d2d2;"></div>
</body>
</html>
